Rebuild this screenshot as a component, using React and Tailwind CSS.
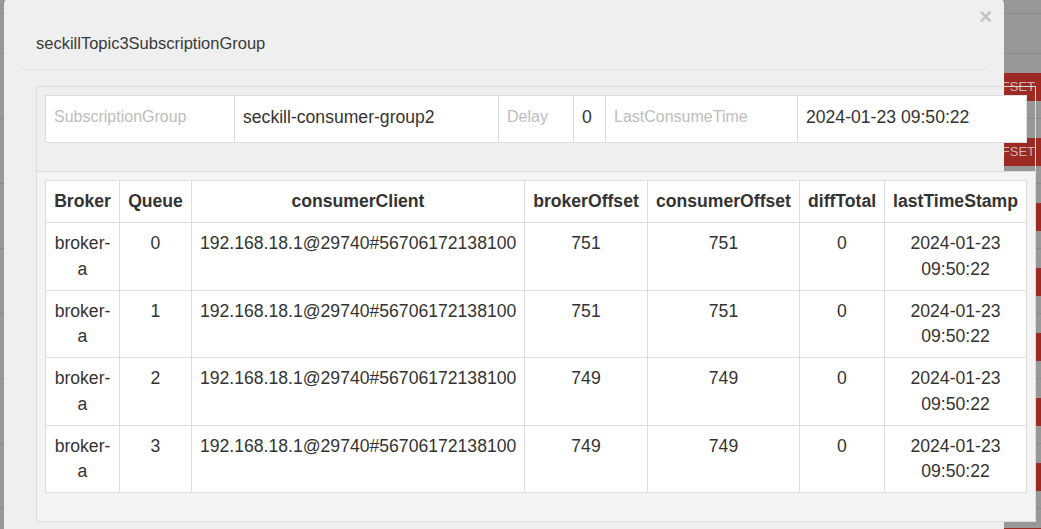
const rows = [
  { broker: 'broker-a', queue: 0, client: '192.168.18.1@29740#56706172138100', brokerOffset: 751, consumerOffset: 751, diff: 0, time: '2024-01-23 09:50:22' },
  { broker: 'broker-a', queue: 1, client: '192.168.18.1@29740#56706172138100', brokerOffset: 751, consumerOffset: 751, diff: 0, time: '2024-01-23 09:50:22' },
  { broker: 'broker-a', queue: 2, client: '192.168.18.1@29740#56706172138100', brokerOffset: 749, consumerOffset: 749, diff: 0, time: '2024-01-23 09:50:22' },
  { broker: 'broker-a', queue: 3, client: '192.168.18.1@29740#56706172138100', brokerOffset: 749, consumerOffset: 749, diff: 0, time: '2024-01-23 09:50:22' },
]

const columns = [
  { key: 'broker', label: 'Broker', w: 'w-[74px]' },
  { key: 'queue', label: 'Queue', w: 'w-[72px]' },
  { key: 'client', label: 'consumerClient', w: 'w-[333px]' },
  { key: 'brokerOffset', label: 'brokerOffset', w: 'w-[123px]' },
  { key: 'consumerOffset', label: 'consumerOffset', w: 'w-[152px]' },
  { key: 'diff', label: 'diffTotal', w: 'w-[85px]' },
  { key: 'time', label: 'lastTimeStamp', w: 'w-[142px]' },
]

// the page behind the dialog, mostly hidden
function Backdrop() {
  return (
    <div className="flex flex-col w-full h-full bg-[#989898]">
      <div className="h-[14px] shrink-0 border-b border-[#8a8a8a]" />
      <div className="h-[40px] shrink-0 border-b border-[#8a8a8a]" />
      {[0, 1, 2, 3, 4, 5, 6, 7].map((i) => (
        <div key={i} className="h-[65px] shrink-0 border-b border-[#8a8a8a] flex justify-end items-start pt-[19px]">
          <div className="h-[28px] bg-[#9d2a22] text-[#c9b4b2] text-[13px] leading-[28px] pl-2 pr-[6px] whitespace-nowrap">RESET OFFSET</div>
        </div>
      ))}
    </div>
  )
}

export default function App() {
  return (
    <div className="relative w-[1041px] h-[529px] overflow-hidden font-['Liberation_Sans',Arial,sans-serif] text-[#333]">
      <Backdrop />

      <div className="absolute left-[4px] top-[-2px] w-[1000px] h-[560px] bg-[#efefef] rounded-[6px]">
        <div className="px-[17px]">
          <div className="h-[72px] pt-[20px] pl-[15px] flex items-center border-b border-[#e2e2e2] text-[16.5px] text-[#3a3a3a]">
            seckillTopic3SubscriptionGroup
          </div>
        </div>
        <div className="absolute right-[12px] top-[8px] text-[22px] font-bold text-[#c2c2c2] leading-none">×</div>

        <div className="px-[32px] pt-[16px]">
          <div className="w-[1000px] border border-[#dcdcdc]">
            <div className="px-[8px] pt-[8px] pb-[28px] border-b border-[#dcdcdc]">
              <table className="w-[981px] table-fixed border-collapse bg-white text-[16px]">
                <tbody>
                  <tr className="h-[47px]">
                    <td className="w-[189px] border border-[#ddd] px-[8px] pb-[4px] text-[#bdbdbd]">SubscriptionGroup</td>
                    <td className="w-[264px] border border-[#ddd] px-[8px] pb-[4px] text-[17.6px]">seckill-consumer-group2</td>
                    <td className="w-[75px] border border-[#ddd] px-[8px] pb-[4px] text-[#bdbdbd]">Delay</td>
                    <td className="w-[32px] border border-[#ddd] px-[8px] pb-[4px] text-[17.6px]">0</td>
                    <td className="w-[192px] border border-[#ddd] px-[8px] pb-[4px] text-[#bdbdbd]">LastConsumeTime</td>
                    <td className="w-[229px] border border-[#ddd] px-[8px] pb-[4px] text-[17.6px]">2024-01-23 09:50:22</td>
                  </tr>
                </tbody>
              </table>
            </div>

            <div className="bg-[#f4f4f4] px-[8px] pt-[8px] pb-[28px]">
              <table className="w-[981px] table-fixed border-collapse bg-white text-[17.6px] leading-[25.25px]">
                <thead>
                  <tr>
                    {columns.map((c) => (
                      <th key={c.key} className={`${c.w} border border-[#ddd] p-[8px] font-bold text-center`}>{c.label}</th>
                    ))}
                  </tr>
                </thead>
                <tbody>
                  {rows.map((r) => (
                    <tr key={r.queue}>
                      {columns.map((c) => (
                        <td key={c.key} className="border border-[#ddd] p-[8px] text-center align-top">{r[c.key]}</td>
                      ))}
                    </tr>
                  ))}
                </tbody>
              </table>
            </div>
          </div>
        </div>
      </div>
    </div>
  )
}
